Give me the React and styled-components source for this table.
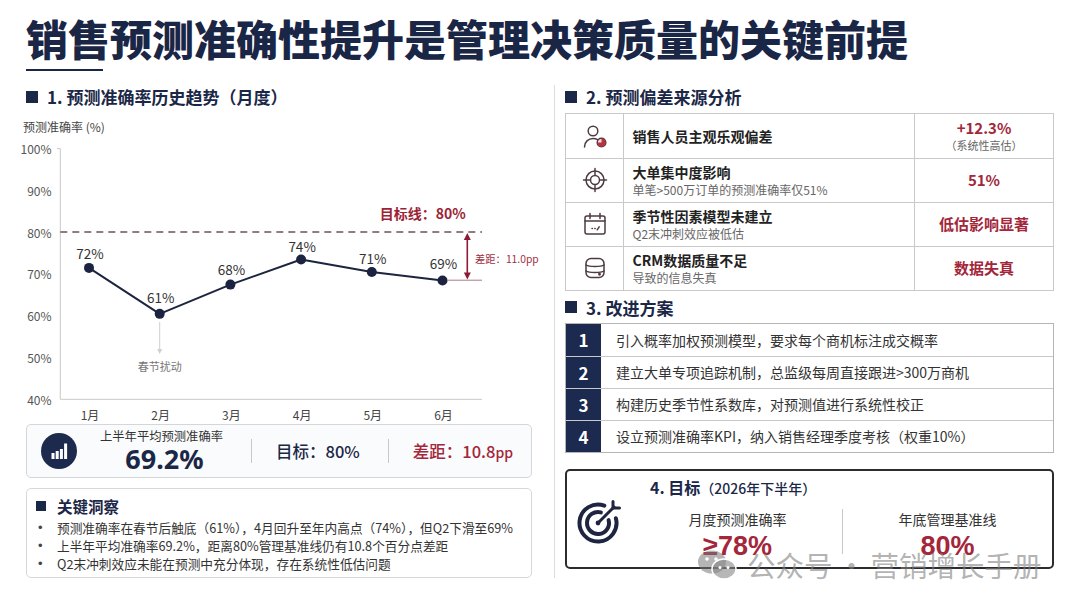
import React from "react";
import styled, { createGlobalStyle } from "styled-components";

const GlobalStyle = createGlobalStyle`
  html, body {
    margin: 0;
    padding: 0;
    background: #ffffff;
  }
  body {
    font-family: "Noto Sans CJK SC", "Noto Sans", sans-serif;
    color: #222;
  }
  * {
    box-sizing: border-box;
  }
`;

const months = ["1月", "2月", "3月", "4月", "5月", "6月"];
const values = [72, 61, 68, 74, 71, 69];
const labelOffsets = [-14.8, -17, -15.7, -13.8, -13.9, -17];
const ticks = [100, 90, 80, 70, 60, 50, 40];

const yAt = (v) => 399.3 - (v - 40) * 4.178;
const xAt = (i) => 89 + i * 70.7;
const ptY = (v) => yAt(v) + 2.3;

const biases = [
  { icon: "user", title: "销售人员主观乐观偏差", value: "+12.3%", note: "（系统性高估）" },
  { icon: "focus", title: "大单集中度影响", sub: "单笔>500万订单的预测准确率仅51%", value: "51%" },
  { icon: "calendar", title: "季节性因素模型未建立", sub: "Q2末冲刺效应被低估", value: "低估影响显著" },
  { icon: "database", title: "CRM数据质量不足", sub: "导致的信息失真", value: "数据失真" },
];

const plans = [
  "引入概率加权预测模型，要求每个商机标注成交概率",
  "建立大单专项追踪机制，总监级每周直接跟进>300万商机",
  "构建历史季节性系数库，对预测值进行系统性校正",
  "设立预测准确率KPI，纳入销售经理季度考核（权重10%）",
];

const insights = [
  "预测准确率在春节后触底（61%），4月回升至年内高点（74%），但Q2下滑至69%",
  "上半年平均准确率69.2%，距离80%管理基准线仍有10.8个百分点差距",
  "Q2末冲刺效应未能在预测中充分体现，存在系统性低估问题",
];

// Icons
const IconSvg = ({ children }) => (
  <svg width="26" height="26" viewBox="0 0 26 26" fill="none" stroke="#4d3b40" strokeWidth="1.5" strokeLinecap="round" strokeLinejoin="round">
    {children}
  </svg>
);

const BiasIcon = ({ type }) => {
  if (type === "user") {
    return (
      <IconSvg>
        <circle cx="11" cy="8" r="4.8" />
        <path d="M2.5 24c0-5 3.8-8.5 8.5-8.5c1.8 0 3.3 0.4 4.6 1.2" />
        <circle cx="19.5" cy="19.5" r="4.3" fill="#f6dfe2" />
        <path d="M19.5 19.5V15.2A4.3 4.3 0 1 1 15.2 19.5Z" fill="#b8323f" stroke="none" />
      </IconSvg>
    );
  }
  if (type === "focus") {
    return (
      <IconSvg>
        <circle cx="13" cy="13" r="9" />
        <circle cx="13" cy="13" r="4.5" />
        <path d="M13 1.5v6M13 18.5v6M1.5 13h6M18.5 13h6" />
      </IconSvg>
    );
  }
  if (type === "calendar") {
    return (
      <IconSvg>
        <rect x="3" y="5" width="20" height="18" rx="2" />
        <path d="M3 10h20M8 2.5v5M18 2.5v5" />
        <path d="M10 17.5h.4M12.8 17.5h.4M15.2 18.8l2-3" />
      </IconSvg>
    );
  }
  return (
    <IconSvg>
      <rect x="4" y="3.5" width="18" height="19" rx="5" />
      <path d="M4 10c3 2 15 2 18 0M4 16c3 2 15 2 18 0" />
      <circle cx="17.5" cy="19.3" r="0.7" fill="#4d3b40" />
    </IconSvg>
  );
};

const BarsIcon = () => (
  <svg width="36" height="36" viewBox="0 0 36 36">
    <circle cx="18" cy="18" r="18" fill="#1c2b4d" />
    <rect x="10.5" y="20" width="3" height="6" fill="#fff" />
    <rect x="14.7" y="18" width="3" height="8" fill="#fff" />
    <rect x="18.9" y="16" width="3" height="10" fill="#fff" />
    <rect x="23.1" y="10.5" width="3" height="15.5" fill="#fff" />
  </svg>
);

const TargetIcon = () => (
  <svg width="48" height="48" viewBox="0 0 48 48" fill="none" stroke="#1e2540" strokeWidth="4" strokeLinecap="round" strokeLinejoin="round">
    <path d="M39.87 21.21A18.5 18.5 0 1 1 28.33 8.61" />
    <path d="M32.63 23.15A11 11 0 1 1 24.85 15.37" />
    <circle cx="22" cy="26" r="2.4" fill="#1e2540" stroke="none" />
    <path d="M22 26L38 10" strokeWidth="3" />
    <path d="M37 4.5V11H43.5" strokeWidth="3" />
  </svg>
);

const WechatIcon = () => (
  <svg width="40" height="32" viewBox="0 0 40 32">
    <ellipse cx="15" cy="13" rx="14" ry="11.5" fill="rgba(120,120,120,0.55)" />
    <ellipse cx="27" cy="20" rx="12" ry="10" fill="rgba(135,135,135,0.6)" stroke="#fff" strokeWidth="1.5" />
    <circle cx="10" cy="10" r="1.8" fill="#fff" />
    <circle cx="19" cy="10" r="1.8" fill="#fff" />
    <circle cx="23" cy="18.5" r="1.5" fill="#fff" />
    <circle cx="31" cy="18.5" r="1.5" fill="#fff" />
  </svg>
);

const TrendChart = () => (
  <ChartSvg width="514" height="312" viewBox="26 112 514 312">
    <text x="23" y="126" fontSize="12" fill="#444" dominantBaseline="central">预测准确率 (%)</text>
    {ticks.map((t) => (
      <text key={t} x="51.6" y={yAt(t)} fontSize="12" fill="#555" textAnchor="end" dominantBaseline="central">
        {t}%
      </text>
    ))}
    <path d="M57 148.6H60.3V399.3H482" stroke="#c9c9c9" strokeWidth="1" fill="none" />
    {months.map((m, i) => (
      <text key={m} x={xAt(i) + 1} y="414.5" fontSize="12" fill="#444" textAnchor="middle" dominantBaseline="central">
        {m}
      </text>
    ))}
    <line x1="60.3" y1="231.9" x2="482" y2="231.9" stroke="#6b5358" strokeWidth="1.5" strokeDasharray="7 5" />
    <text x="422.7" y="213.3" fontSize="14" fontWeight="700" fill="#9b2335" textAnchor="middle" dominantBaseline="central">
      目标线：80%
    </text>
    <line x1="447.7" y1="280.2" x2="482" y2="280.2" stroke="#a87a84" strokeWidth="1" />
    <line x1="467.3" y1="238" x2="467.3" y2="274" stroke="#8a1c35" strokeWidth="1.6" />
    <polygon points="467.3,233 463.8,240 470.8,240" fill="#8a1c35" />
    <polygon points="467.3,279.5 463.8,272.5 470.8,272.5" fill="#8a1c35" />
    <text x="475" y="258.8" fontSize="10.3" fill="#a0303f" dominantBaseline="central">差距：11.0pp</text>
    <line x1={xAt(1)} y1="322" x2={xAt(1)} y2="350" stroke="#cfcfcf" strokeWidth="1" />
    <polygon points={`${xAt(1)},354 ${xAt(1) - 2.5},349 ${xAt(1) + 2.5},349`} fill="#cfcfcf" />
    <text x={xAt(1)} y="365.5" fontSize="11" fill="#777" textAnchor="middle" dominantBaseline="central">春节扰动</text>
    <polyline
      points={values.map((v, i) => `${xAt(i)},${ptY(v)}`).join(" ")}
      fill="none"
      stroke="#1d2440"
      strokeWidth="2"
      strokeLinejoin="round"
    />
    {values.map((v, i) => (
      <g key={i}>
        <circle cx={xAt(i)} cy={ptY(v)} r="5" fill="#1b2340" />
        <text x={xAt(i) + 1} y={ptY(v) + labelOffsets[i]} fontSize="13.5" fill="#333" textAnchor="middle" dominantBaseline="central">
          {v}%
        </text>
      </g>
    ))}
  </ChartSvg>
);

const App = () => {
  return (
    <>
      <GlobalStyle />
      <Page>
        <Title>销售预测准确性提升是管理决策质量的关键前提</Title>
        <TitleRule />
        <Body>
          <LeftCol>
            <SectionHeading>
              <Square />
              1. 预测准确率历史趋势（月度）
            </SectionHeading>
            <TrendChart />
            <SummaryBox>
              <BarsIcon />
              <SummaryStack>
                <SummaryLabel>上半年平均预测准确率</SummaryLabel>
                <SummaryValue>69.2%</SummaryValue>
              </SummaryStack>
              <VDivider />
              <SummaryStat>目标：80%</SummaryStat>
              <VDivider />
              <SummaryStat $red>
                差距：10.8<Small>pp</Small>
              </SummaryStat>
            </SummaryBox>
            <InsightBox>
              <InsightTitle>
                <Square $size={10} />
                关键洞察
              </InsightTitle>
              <BulletList>
                {insights.map((t) => (
                  <Bullet key={t}>
                    <BulletDot>•</BulletDot>
                    {t}
                  </Bullet>
                ))}
              </BulletList>
            </InsightBox>
          </LeftCol>

          <RightCol>
            <SectionHeading>
              <Square />
              2. 预测偏差来源分析
            </SectionHeading>
            <BiasTable>
              {biases.map((b) => (
                <BiasRow key={b.title}>
                  <IconCell>
                    <BiasIcon type={b.icon} />
                  </IconCell>
                  <TextCell>
                    <ItemTitle>{b.title}</ItemTitle>
                    {b.sub && <ItemSub>{b.sub}</ItemSub>}
                  </TextCell>
                  <ValueCell>
                    <ValueMain>{b.value}</ValueMain>
                    {b.note && <ValueNote>{b.note}</ValueNote>}
                  </ValueCell>
                </BiasRow>
              ))}
            </BiasTable>

            <SectionHeading $top={4.5}>
              <Square />
              3. 改进方案
            </SectionHeading>
            <PlanList>
              {plans.map((p, i) => (
                <PlanRow key={p}>
                  <PlanNum>{i + 1}</PlanNum>
                  <PlanText>{p}</PlanText>
                </PlanRow>
              ))}
            </PlanList>

            <GoalBox>
              <GoalIcon>
                <TargetIcon />
              </GoalIcon>
              <GoalContent>
                <GoalHeading>
                  4. 目标<GoalYear>（2026年下半年）</GoalYear>
                </GoalHeading>
                <GoalGrid>
                  <GoalCol>
                    <GoalLabel>月度预测准确率</GoalLabel>
                    <GoalValue>≥78%</GoalValue>
                  </GoalCol>
                  <GoalDivider />
                  <GoalCol>
                    <GoalLabel>年底管理基准线</GoalLabel>
                    <GoalValue>80%</GoalValue>
                  </GoalCol>
                </GoalGrid>
              </GoalContent>
            </GoalBox>
          </RightCol>
        </Body>

        <Watermark>
          <WechatIcon />
          <WatermarkText>
            公众号<WatermarkDot>·</WatermarkDot>营销增长手册
          </WatermarkText>
        </Watermark>
      </Page>
    </>
  );
};

export default App;

// Styled Components
const Page = styled.div`
  position: relative;
  width: 1080px;
  height: 608px;
  overflow: hidden;
  padding: 12px 26px 0 26px;
  background: #ffffff;
`;

const Title = styled.h1`
  margin: 0;
  font-size: 42px;
  line-height: 52px;
  font-weight: 900;
  color: #1a2646;
  white-space: nowrap;
`;

const TitleRule = styled.div`
  width: 77px;
  height: 2px;
  margin-top: 4.5px;
  background: #1a2646;
`;

const Body = styled.div`
  display: flex;
  margin-top: 14px;
`;

const LeftCol = styled.div`
  flex: none;
  width: 514px;
`;

const RightCol = styled.div`
  flex: none;
  width: 500px;
  margin-left: 14px;
  padding-left: 10px;
  border-left: 1px solid #dcdcdc;
  padding-bottom: 4px;
`;

const SectionHeading = styled.div`
  display: flex;
  align-items: center;
  gap: 9px;
  height: 24px;
  margin-top: ${(p) => p.$top || 0}px;
  font-size: 17px;
  font-weight: 700;
  color: #1b2747;
  white-space: nowrap;
`;

const Square = styled.span`
  display: inline-block;
  flex: none;
  width: ${(p) => p.$size || 12}px;
  height: ${(p) => p.$size || 12}px;
  background: #1b2747;
`;

const ChartSvg = styled.svg`
  display: block;
  margin-top: 3px;
  overflow: visible;
  font-family: "Noto Sans CJK SC", "Noto Sans", sans-serif;
`;

const SummaryBox = styled.div`
  display: flex;
  align-items: center;
  width: 506px;
  height: 54px;
  padding-left: 14px;
  border: 1px solid #d4d6da;
  border-radius: 5px;
  background: #fafbfc;
`;

const SummaryStack = styled.div`
  display: flex;
  flex-direction: column;
  align-items: center;
  gap: 1px;
  margin-left: 23px;
`;

const SummaryLabel = styled.div`
  font-size: 12.3px;
  line-height: 15px;
  color: #333;
  white-space: nowrap;
`;

const SummaryValue = styled.div`
  font-family: "Noto Sans", "Noto Sans CJK SC", sans-serif;
  font-size: 27px;
  line-height: 28px;
  font-weight: 700;
  color: #1b2747;
  margin-left: 6px;
`;

const VDivider = styled.div`
  width: 1px;
  height: 24px;
  margin: 0 24px 0 28px;
  background: #c8c8c8;
`;

const SummaryStat = styled.div`
  font-size: 16.5px;
  font-weight: 500;
  color: ${(p) => (p.$red ? "#a3263a" : "#1b2747")};
  white-space: nowrap;
`;

const Small = styled.span`
  font-size: 14px;
`;

const InsightBox = styled.div`
  width: 506px;
  height: 90px;
  margin-top: 10px;
  padding: 7px 9px 4px 9px;
  border: 1px solid #d8d8d8;
  border-radius: 5px;
  background: #ffffff;
`;

const InsightTitle = styled.div`
  display: flex;
  align-items: center;
  gap: 11px;
  height: 20px;
  font-size: 15.5px;
  font-weight: 700;
  color: #1b2747;
`;

const BulletList = styled.div`
  margin-top: 3px;
  margin-left: 2px;
`;

const Bullet = styled.div`
  display: flex;
  height: 18px;
  line-height: 18px;
  font-size: 12.7px;
  color: #333;
  white-space: nowrap;
`;

const BulletDot = styled.span`
  flex: none;
  width: 19px;
  font-family: "Liberation Sans", sans-serif;
  font-size: 13px;
  color: #444;
`;

const BiasTable = styled.div`
  margin-top: 4px;
  width: 489px;
  border: 1px solid #c9c9c9;
`;

const BiasRow = styled.div`
  display: grid;
  grid-template-columns: 58px 291px 1fr;
  height: 44px;

  & + & {
    border-top: 1px solid #c9c9c9;
  }
`;

const IconCell = styled.div`
  display: flex;
  align-items: center;
  justify-content: center;
  border-right: 1px solid #c9c9c9;
`;

const TextCell = styled.div`
  display: flex;
  flex-direction: column;
  justify-content: center;
  padding-left: 8.5px;
  border-right: 1px solid #c9c9c9;
`;

const ItemTitle = styled.div`
  font-size: 14px;
  line-height: 18px;
  font-weight: 700;
  color: #222;
  white-space: nowrap;
`;

const ItemSub = styled.div`
  font-size: 12px;
  line-height: 17px;
  color: #666;
  white-space: nowrap;
`;

const ValueCell = styled.div`
  display: flex;
  flex-direction: column;
  align-items: center;
  justify-content: center;
`;

const ValueMain = styled.div`
  font-size: 15px;
  line-height: 18px;
  font-weight: 700;
  color: #a3263a;
  white-space: nowrap;
`;

const ValueNote = styled.div`
  font-size: 11px;
  line-height: 16px;
  color: #666;
  white-space: nowrap;
`;

const PlanList = styled.div`
  margin-top: 3.5px;
  width: 489px;
  border: 1px solid #b5b5b5;
`;

const PlanRow = styled.div`
  display: flex;
  height: 32px;

  & + & {
    border-top: 1px solid #c9c9c9;
  }
`;

const PlanNum = styled.div`
  flex: none;
  width: 35px;
  display: flex;
  align-items: center;
  justify-content: center;
  background: #1b2a4e;
  color: #ffffff;
  font-size: 17px;
  font-weight: 700;
`;

const PlanText = styled.div`
  display: flex;
  align-items: center;
  padding-left: 15px;
  font-size: 14px;
  color: #333;
  white-space: nowrap;
`;

const GoalBox = styled.div`
  display: flex;
  width: 489px;
  height: 100px;
  margin-top: 16.5px;
  border: 2px solid #2c2c2c;
  border-radius: 5px;
  background: #ffffff;
`;

const GoalIcon = styled.div`
  flex: none;
  width: 66px;
  display: flex;
  align-items: center;
  justify-content: center;
  padding-top: 4px;
`;

const GoalContent = styled.div`
  flex: 1;
  padding-top: 5px;
`;

const GoalHeading = styled.div`
  padding-left: 17px;
  height: 22px;
  line-height: 22px;
  font-size: 16px;
  font-weight: 700;
  color: #1b2747;
  white-space: nowrap;
`;

const GoalYear = styled.span`
  font-size: 14px;
  font-weight: 500;
`;

const GoalGrid = styled.div`
  display: grid;
  grid-template-columns: 1fr 1px 1fr;
  margin-top: 11px;
`;

const GoalCol = styled.div`
  display: flex;
  flex-direction: column;
  align-items: center;
`;

const GoalLabel = styled.div`
  font-size: 14px;
  line-height: 20px;
  color: #333;
`;

const GoalValue = styled.div`
  margin-top: 2px;
  font-family: "Liberation Sans", "Noto Sans CJK SC", sans-serif;
  font-size: 27px;
  line-height: 30px;
  font-weight: 700;
  color: #a3263a;
`;

const GoalDivider = styled.div`
  width: 1px;
  height: 45px;
  background: #c8c8c8;
`;

const Watermark = styled.div`
  position: absolute;
  left: 697px;
  top: 549px;
  display: flex;
  align-items: center;
  gap: 10px;
  pointer-events: none;
`;

const WatermarkText = styled.div`
  font-size: 28.5px;
  line-height: 30px;
  font-weight: 400;
  color: rgba(130, 130, 130, 0.62);
  white-space: nowrap;
`;

const WatermarkDot = styled.span`
  display: inline-block;
  width: 38px;
  text-align: center;
`;
